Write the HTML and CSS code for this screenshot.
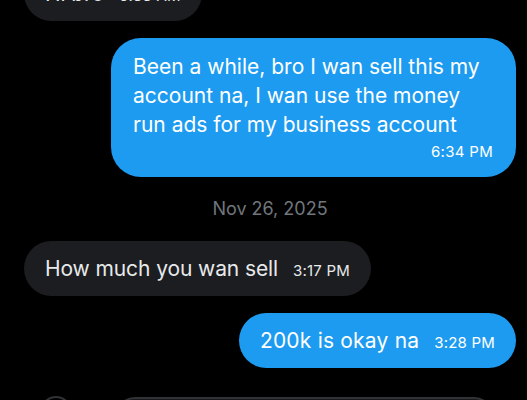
FILE: index.html
```html
<!DOCTYPE html>
<html>
<head>
<meta charset="utf-8">
<link rel="stylesheet" href="styles.css">
</head>
<body>
<div class="chat">
  <div class="row in">
    <div class="bubble gray"><span class="msg">Hi bro</span><span class="time">6:33 AM</span></div>
  </div>
  <div class="row out">
    <div class="bubble blue big">
      <div class="msg">Been a while, bro I wan sell this my account na, I wan use the money run ads for my business account</div>
      <div class="time right">6:34 PM</div>
    </div>
  </div>
  <div class="date">Nov 26, 2025</div>
  <div class="row in">
    <div class="bubble gray"><span class="msg">How much you wan sell</span><span class="time">3:17 PM</span></div>
  </div>
  <div class="row out">
    <div class="bubble blue"><span class="msg">200k is okay na</span><span class="time">3:28 PM</span></div>
  </div>
  <div class="composer">
    <div class="circle"></div>
    <div class="input"></div>
  </div>
</div>
</body>
</html>
```
FILE: styles.css
```css
html, body {
  margin: 0;
  padding: 0;
  background: #000;
  overflow: hidden;
  height: 400px;
}
.chat {
  font-family: "Inter", "Roboto", sans-serif;
  display: flex;
  flex-direction: column;
  margin-top: -34px;
  padding: 0 11px 0 24px;
}
.row {
  display: flex;
  margin-bottom: 17px;
}
.row.out { justify-content: flex-end; }
.row.in { justify-content: flex-start; }
.bubble {
  display: flex;
  align-items: center;
  height: 55px;
  box-sizing: border-box;
  padding: 0 21px;
  border-radius: 28px;
  gap: 15px;
}
.gray { background: #1c1d20; color: #e7e9ea; }
.blue { background: #1d9bf0; color: #fff; }
.msg {
  font-size: 21px;
  letter-spacing: -0.1px;
}
.blue .msg {
  letter-spacing: 0.2px;
}
.time {
  font-size: 15px;
  margin-top: 4px;
  letter-spacing: 0.2px;
}
.bubble.big {
  display: block;
  height: auto;
  width: 405px;
  padding: 14px 23px 16px 22px;
  border-radius: 30px;
}
.bubble.big .msg {
  line-height: 29px;
  font-size: 21px;
  letter-spacing: 0;
}
.bubble.big .time {
  text-align: right;
  line-height: 18px;
  margin-top: 4px;
  letter-spacing: 0.3px;
}
.date {
  text-align: center;
  color: #71767b;
  font-size: 18px;
  line-height: 22px;
  margin: 4px 0 21px;
}
.composer {
  display: flex;
  align-items: flex-start;
  gap: 43px;
  margin-top: 11px;
  padding-left: 16px;
  padding-right: 22px;
}
.circle {
  width: 32px;
  height: 32px;
  border-radius: 50%;
  border: 2px solid #2f3336;
  box-sizing: border-box;
}
.input {
  flex: 1;
  height: 40px;
  margin-top: 1px;
  border-radius: 20px;
  background: #16181c;
  border: 2px solid #2f3336;
  box-sizing: border-box;
}
```
